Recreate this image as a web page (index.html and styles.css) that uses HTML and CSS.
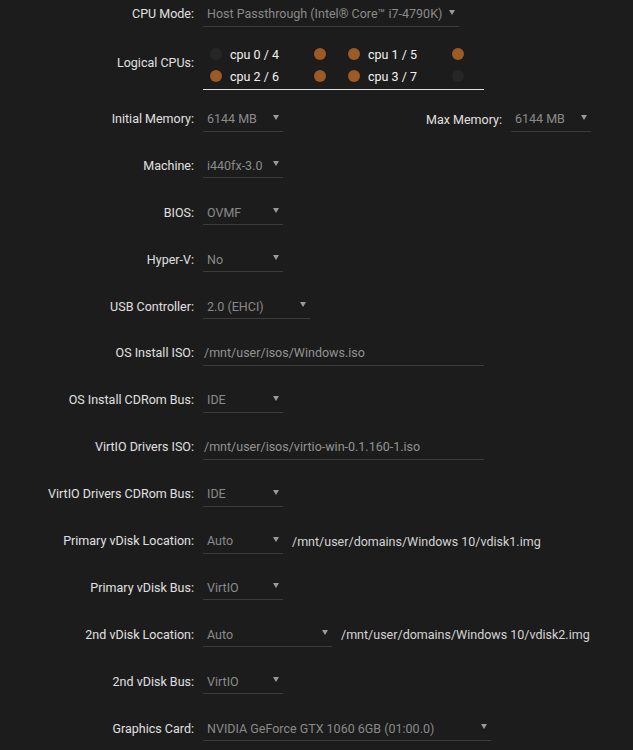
FILE: index.html
```html
<!DOCTYPE html>
<html lang="en">
<head>
<meta charset="utf-8">
<title>VM Settings</title>
<link rel="stylesheet" href="styles.css">
</head>
<body>
<form class="vm-form">
  <div class="row row-top">
    <label class="lbl">CPU Mode:</label>
    <div class="select w-cpu"><span>Host Passthrough (Intel® Core™ i7-4790K)</span><i class="caret"></i></div>
  </div>

  <div class="row row-cpus">
    <label class="lbl lbl-cpus">Logical CPUs:</label>
    <div class="cpus">
      <div class="pair"><span class="dot"></span><span class="cpu-name">cpu 0 / 4</span><span class="dot on"></span></div>
      <div class="pair"><span class="dot on"></span><span class="cpu-name">cpu 1 / 5</span><span class="dot on"></span></div>
      <div class="pair"><span class="dot on"></span><span class="cpu-name">cpu 2 / 6</span><span class="dot on"></span></div>
      <div class="pair"><span class="dot on"></span><span class="cpu-name">cpu 3 / 7</span><span class="dot"></span></div>
    </div>
  </div>

  <div class="row">
    <label class="lbl">Initial Memory:</label>
    <div class="select w-sm"><span>6144 MB</span><i class="caret"></i></div>
    <div class="side">
      <label class="lbl-side">Max Memory:</label>
      <div class="select w-sm"><span>6144 MB</span><i class="caret"></i></div>
    </div>
  </div>

  <div class="row">
    <label class="lbl">Machine:</label>
    <div class="select w-sm"><span>i440fx-3.0</span><i class="caret"></i></div>
  </div>

  <div class="row">
    <label class="lbl">BIOS:</label>
    <div class="select w-sm"><span>OVMF</span><i class="caret"></i></div>
  </div>

  <div class="row">
    <label class="lbl">Hyper-V:</label>
    <div class="select w-sm"><span>No</span><i class="caret"></i></div>
  </div>

  <div class="row">
    <label class="lbl">USB Controller:</label>
    <div class="select w-usb"><span>2.0 (EHCI)</span><i class="caret"></i></div>
  </div>

  <div class="row">
    <label class="lbl">OS Install ISO:</label>
    <div class="input w-wide">/mnt/user/isos/Windows.iso</div>
  </div>

  <div class="row">
    <label class="lbl">OS Install CDRom Bus:</label>
    <div class="select w-sm"><span>IDE</span><i class="caret"></i></div>
  </div>

  <div class="row">
    <label class="lbl">VirtIO Drivers ISO:</label>
    <div class="input w-wide">/mnt/user/isos/virtio-win-0.1.160-1.iso</div>
  </div>

  <div class="row">
    <label class="lbl">VirtIO Drivers CDRom Bus:</label>
    <div class="select w-sm"><span>IDE</span><i class="caret"></i></div>
  </div>

  <div class="row">
    <label class="lbl">Primary vDisk Location:</label>
    <div class="select w-sm"><span>Auto</span><i class="caret"></i></div>
    <span class="path">/mnt/user/domains/Windows 10/vdisk1.img</span>
  </div>

  <div class="row">
    <label class="lbl">Primary vDisk Bus:</label>
    <div class="select w-sm"><span>VirtIO</span><i class="caret"></i></div>
  </div>

  <div class="row">
    <label class="lbl">2nd vDisk Location:</label>
    <div class="select w-md"><span>Auto</span><i class="caret"></i></div>
    <span class="path">/mnt/user/domains/Windows 10/vdisk2.img</span>
  </div>

  <div class="row">
    <label class="lbl">2nd vDisk Bus:</label>
    <div class="select w-sm"><span>VirtIO</span><i class="caret"></i></div>
  </div>

  <div class="row">
    <label class="lbl">Graphics Card:</label>
    <div class="select w-gpu"><span>NVIDIA GeForce GTX 1060 6GB (01:00.0)</span><i class="caret"></i></div>
  </div>
</form>
</body>
</html>
```

FILE: styles.css
```css
html, body {
  margin: 0;
  padding: 0;
  background: #1c1c1c;
}

body {
  font-family: Roboto, "Liberation Sans", sans-serif;
  font-size: 12.5px;
  color: #dedede;
  overflow: hidden;
}

.vm-form {
  display: flex;
  flex-direction: column;
  padding-top: 1px;
  padding-right: 42px;
}

.row {
  display: flex;
  align-items: center;
  height: 46.9px;
}

.row-top {
  height: 26px;
}

.lbl {
  flex: 0 0 203px;
  text-align: right;
  padding-right: 9px;
  box-sizing: border-box;
  color: #e0e0e0;
  line-height: 16px;
  white-space: nowrap;
}

/* dropdown look: grey value, thin underline, caret at the end */
.select {
  display: flex;
  align-items: center;
  justify-content: space-between;
  box-sizing: border-box;
  height: 25px;
  padding: 0 4px 0 4px;
  border-bottom: 1px solid #3b3b3b;
  color: #8a8a8a;
  white-space: nowrap;
}

.caret {
  width: 0;
  height: 0;
  border-left: 3px solid transparent;
  border-right: 3px solid transparent;
  border-top: 5px solid #9a9a9a;
  margin-bottom: 3px;
}

.w-cpu { width: 256px; }
.w-sm  { width: 80px; }
.w-usb { width: 107px; }
.w-md  { width: 129px; }
.w-gpu { width: 288px; }

.input {
  box-sizing: border-box;
  height: 25px;
  line-height: 24px;
  padding-left: 1px;
  border-bottom: 1px solid #3b3b3b;
  color: #939393;
  white-space: nowrap;
}

.w-wide { width: 281px; }

.path {
  margin-left: 9px;
  color: #d4d4d4;
  white-space: nowrap;
}

.side {
  display: flex;
  align-items: center;
  margin-left: auto;
}

.lbl-side {
  color: #e0e0e0;
  margin-right: 9px;
}

/* logical CPU pairs */
.row-cpus {
  height: auto;
  align-items: flex-start;
  padding-top: 16px;
  margin-bottom: 5.6px;
}

.lbl-cpus {
  margin-top: 12px;
}

.cpus {
  display: grid;
  grid-template-columns: 116px 116px;
  column-gap: 22px;
  width: 281px;
  box-sizing: border-box;
  padding: 0 0 2px 7px;
  border-bottom: 1px solid #e2e2e2;
}

.pair {
  display: flex;
  align-items: center;
  height: 22px;
}

.cpu-name {
  flex: 0 0 84px;
  margin-left: 8px;
  color: #f2f2f2;
}

.dot {
  flex: 0 0 12px;
  height: 12px;
  border-radius: 50%;
  background: #262626;
}

.dot.on {
  background: #9c5a25;
}
```
